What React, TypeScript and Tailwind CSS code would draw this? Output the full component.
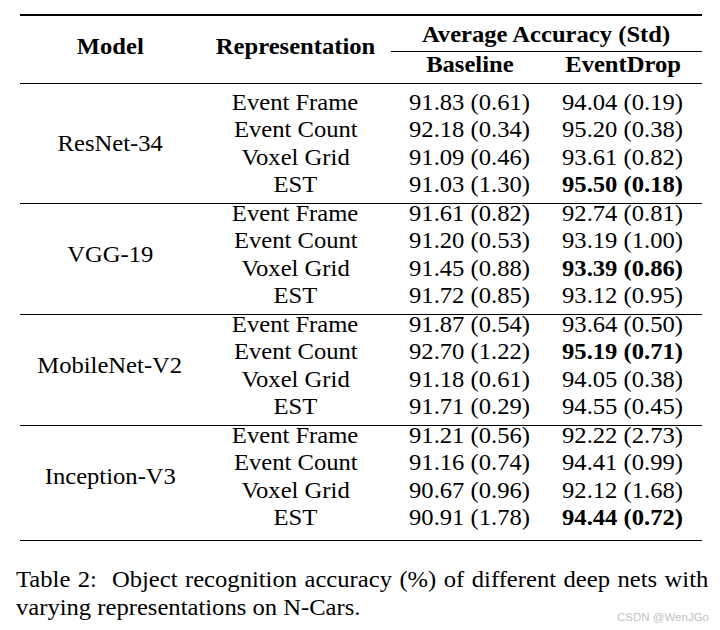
import React from "react";

type Row = { rep: string; base: string; drop: string; bold?: boolean };
type Group = { model: string; rows: Row[] };

const groups: Group[] = [
  {
    model: "ResNet-34",
    rows: [
      { rep: "Event Frame", base: "91.83 (0.61)", drop: "94.04 (0.19)" },
      { rep: "Event Count", base: "92.18 (0.34)", drop: "95.20 (0.38)" },
      { rep: "Voxel Grid", base: "91.09 (0.46)", drop: "93.61 (0.82)" },
      { rep: "EST", base: "91.03 (1.30)", drop: "95.50 (0.18)", bold: true },
    ],
  },
  {
    model: "VGG-19",
    rows: [
      { rep: "Event Frame", base: "91.61 (0.82)", drop: "92.74 (0.81)" },
      { rep: "Event Count", base: "91.20 (0.53)", drop: "93.19 (1.00)" },
      { rep: "Voxel Grid", base: "91.45 (0.88)", drop: "93.39 (0.86)", bold: true },
      { rep: "EST", base: "91.72 (0.85)", drop: "93.12 (0.95)" },
    ],
  },
  {
    model: "MobileNet-V2",
    rows: [
      { rep: "Event Frame", base: "91.87 (0.54)", drop: "93.64 (0.50)" },
      { rep: "Event Count", base: "92.70 (1.22)", drop: "95.19 (0.71)", bold: true },
      { rep: "Voxel Grid", base: "91.18 (0.61)", drop: "94.05 (0.38)" },
      { rep: "EST", base: "91.71 (0.29)", drop: "94.55 (0.45)" },
    ],
  },
  {
    model: "Inception-V3",
    rows: [
      { rep: "Event Frame", base: "91.21 (0.56)", drop: "92.22 (2.73)" },
      { rep: "Event Count", base: "91.16 (0.74)", drop: "94.41 (0.99)" },
      { rep: "Voxel Grid", base: "90.67 (0.96)", drop: "92.12 (1.68)" },
      { rep: "EST", base: "90.91 (1.78)", drop: "94.44 (0.72)", bold: true },
    ],
  },
];

function T({ children, bold }: { children: React.ReactNode; bold?: boolean }) {
  return (
    <span
      className={
        "inline-block scale-x-[1.07] whitespace-nowrap leading-[20.5px] " +
        (bold ? "font-bold" : "font-normal")
      }
    >
      {children}
    </span>
  );
}

function Cell({ children, bold }: { children: React.ReactNode; bold?: boolean }) {
  return (
    <div className="h-[27.5px] flex justify-center items-start">
      <T bold={bold}>{children}</T>
    </div>
  );
}

function GroupBlock({ g, className }: { g: Group; className?: string }) {
  return (
    <div className={"flex " + (className ?? "")}>
      <div className="w-[180px] flex items-center justify-center">
        <Cell>{g.model}</Cell>
      </div>
      <div className="grid grid-cols-[191px_158px_148px]">
        {g.rows.map((r, i) => (
          <React.Fragment key={i}>
            <Cell>{r.rep}</Cell>
            <Cell>{r.base}</Cell>
            <Cell bold={r.bold}>{r.drop}</Cell>
          </React.Fragment>
        ))}
      </div>
    </div>
  );
}

export default function App() {
  return (
    <div className="w-[720px] h-[630px] bg-white relative overflow-hidden text-black [font-family:'Liberation_Serif',serif] text-[23px]">
      <div className="pt-[14px] pl-[20px]">
        <div className="w-[682px]">
          <div className="h-[1.5px] bg-black" />
          <div className="flex h-[67px]">
            <div className="w-[180px] flex items-center justify-center pb-[3px]">
              <T bold>Model</T>
            </div>
            <div className="w-[191px] flex items-center justify-center pb-[3px]">
              <T bold>Representation</T>
            </div>
            <div className="flex-1 flex flex-col">
              <div className="h-[35px] flex justify-center items-start pt-[9px]">
                <T bold>Average Accuracy (Std)</T>
              </div>
              <div className="h-px bg-black" />
              <div className="flex-1 grid grid-cols-[158px_148px]">
                <div className="flex justify-center items-start pt-[3px]">
                  <T bold>Baseline</T>
                </div>
                <div className="flex justify-center items-start pt-[3px]">
                  <T bold>EventDrop</T>
                </div>
              </div>
            </div>
          </div>
          <div className="h-[1.5px] bg-black" />
          <GroupBlock g={groups[0]} className="pt-[8.75px]" />
          <div className="h-px bg-black" />
          <GroupBlock g={groups[1]} />
          <div className="h-px bg-black" />
          <GroupBlock g={groups[2]} />
          <div className="h-px bg-black" />
          <GroupBlock g={groups[3]} className="pb-[4px]" />
          <div className="h-[1.5px] bg-black" />
        </div>
      </div>
      <div className="mt-[25px] ml-[16px] w-[647px] origin-left scale-x-[1.07] text-justify leading-[27.5px]">
        Table 2:{"\u00a0"} Object recognition accuracy (%) of different deep nets with varying
        representations on N-Cars.
      </div>
      <div className="absolute left-[617px] top-[609px] text-[11.5px] leading-[16px] text-[#c2c2c2] [font-family:'Liberation_Sans',sans-serif] whitespace-nowrap">
        CSDN @WenJGo
      </div>
    </div>
  );
}
